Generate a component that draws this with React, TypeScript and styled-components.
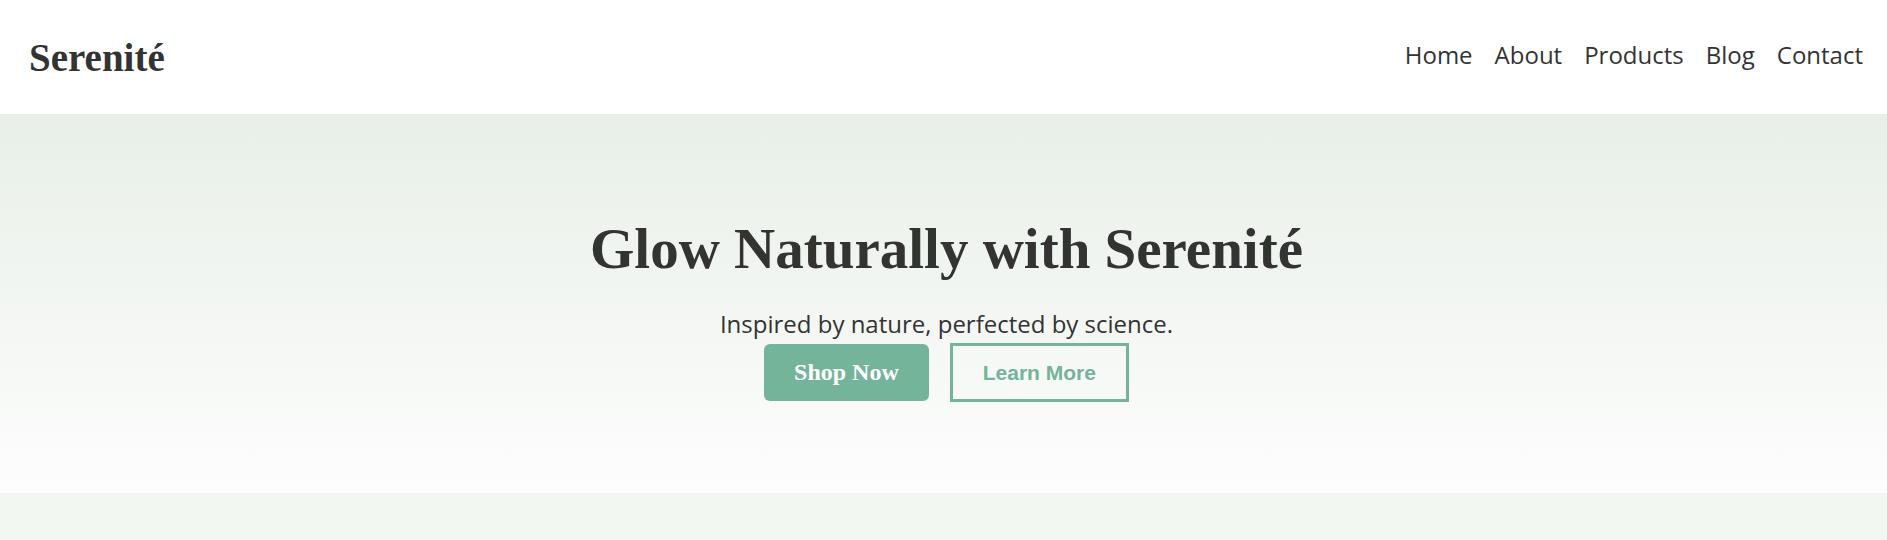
import React from "react";
import styled, { createGlobalStyle } from "styled-components";

const GlobalStyle = createGlobalStyle`
  html, body {
    margin: 0;
    padding: 0;
    background: #f3f7f2;
  }
  body {
    font-family: "Open Sans", "Liberation Sans", sans-serif;
    color: #333333;
  }
  * { box-sizing: border-box; }
`;

const Page = styled.div`
  display: flex;
  flex-direction: column;
  min-height: 540px;
  background: #f3f7f2;
`;

const Header = styled.header`
  height: 114px;
  background: #ffffff;
  display: flex;
  align-items: center;
  justify-content: space-between;
  padding: 0 24px 0 29px;
`;

const Logo = styled.div`
  font-family: "Liberation Serif", "DejaVu Serif", serif;
  font-weight: 700;
  font-size: 39px;
  color: #333333;
`;

const Nav = styled.nav`
  display: flex;
  gap: 22px;
  padding-bottom: 6px;
`;

const NavLink = styled.a`
  font-family: "Open Sans", "Liberation Sans", sans-serif;
  font-size: 24px;
  color: #333333;
  text-decoration: none;
`;

const Hero = styled.section`
  background: linear-gradient(to bottom, #e8efe8 0%, #fdfdfd 100%);
  padding: 103px 0 91px 6px;
  display: flex;
  flex-direction: column;
  align-items: center;
  text-align: center;
`;

const Title = styled.h1`
  margin: 0;
  font-family: "Liberation Serif", "DejaVu Serif", serif;
  font-weight: 700;
  font-size: 57px;
  line-height: 64px;
  color: #333333;
`;

const Subtitle = styled.p`
  margin: 27px 0 0;
  font-family: "Open Sans", "Liberation Sans", sans-serif;
  font-size: 24px;
  line-height: 32px;
  color: #333333;
`;

const Actions = styled.div`
  margin-top: 3px;
  display: flex;
  align-items: center;
  gap: 21px;
`;

const PrimaryButton = styled.button`
  background: #74b49b;
  color: #ffffff;
  border: none;
  border-radius: 6px;
  padding: 14px 30px;
  font-family: "Liberation Serif", "Times New Roman", serif;
  font-weight: 700;
  font-size: 24px;
  line-height: 29px;
  cursor: pointer;
`;

const OutlineButton = styled.button`
  background: transparent;
  color: #74b49b;
  border: 3px solid #74b49b;
  border-radius: 0;
  padding: 14px 30px;
  font-family: "Liberation Sans", Arial, sans-serif;
  font-weight: 700;
  font-size: 21px;
  line-height: 25px;
  cursor: pointer;
`;

const Lower = styled.section`
  flex: 1;
  background: #f3f7f2;
`;

const links = ["Home", "About", "Products", "Blog", "Contact"];

export default function App() {
  return (
    <>
      <GlobalStyle />
      <Page>
        <Header>
          <Logo>Serenité</Logo>
          <Nav>
            {links.map((l) => (
              <NavLink key={l} href="#">
                {l}
              </NavLink>
            ))}
          </Nav>
        </Header>
        <Hero>
          <Title>Glow Naturally with Serenité</Title>
          <Subtitle>Inspired by nature, perfected by science.</Subtitle>
          <Actions>
            <PrimaryButton>Shop Now</PrimaryButton>
            <OutlineButton>Learn More</OutlineButton>
          </Actions>
        </Hero>
        <Lower />
      </Page>
    </>
  );
}
